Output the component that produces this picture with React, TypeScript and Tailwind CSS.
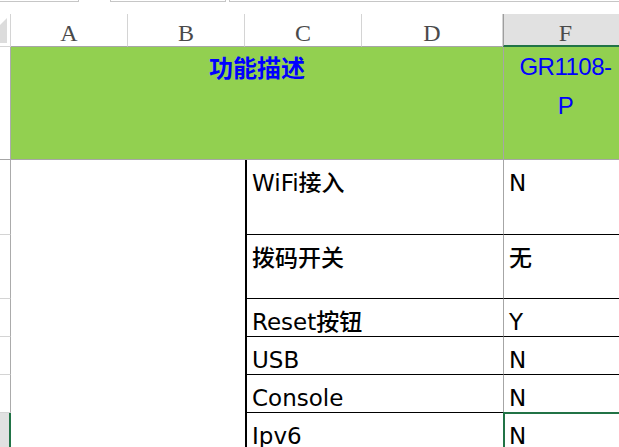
import React from 'react';

const bodyFont = { fontFamily: '"DejaVu Sans", "Noto Sans CJK SC", sans-serif' };

const rows = [
  { label: 'WiFi接入', value: 'N', h: 'h-[75px]' },
  { label: '拨码开关', value: '无', h: 'h-[64px]' },
  { label: 'Reset按钮', value: 'Y', h: 'h-[38px]' },
  { label: 'USB', value: 'N', h: 'h-[38px]' },
  { label: 'Console', value: 'N', h: 'h-[38px]' },
  { label: 'Ipv6', value: 'N', h: 'h-[38px]', selected: true },
];

const cols = [
  { name: 'A', w: 'w-[117px]' },
  { name: 'B', w: 'w-[117px]' },
  { name: 'C', w: 'w-[117px]' },
  { name: 'D', w: 'w-[141px]' },
];

export default function App() {
  return (
    <div className="w-[619px] h-[447px] overflow-hidden bg-white">
      <div className="w-[627px]">
        {/* formula bar remnants */}
        <div className="h-[14px] flex items-start">
          <div className="w-[79px] h-[2px] border-b border-r border-[#c6c6c6]" />
          <div className="ml-[31px] w-[116px] h-[2px] border-b border-x border-[#c6c6c6]" />
          <div className="ml-[3px] flex-1 h-[2px] border-b border-l border-[#c6c6c6]" />
        </div>

        {/* column headers */}
        <div className="flex h-[33px]" style={{ fontFamily: '"Liberation Serif", serif' }}>
          <div className="w-[11px] border-r border-b border-[#d4d4d4] relative">
            <svg width="11" height="33" className="absolute left-0 top-0">
              <polygon points="7,4 7,29 0,29 0,11" fill="#dcdcdc" />
            </svg>
          </div>
          {cols.map((c) => (
            <div
              key={c.name}
              className={`${c.w} border-r border-[#d4d4d4] border-b border-b-[#a6a6a6] text-center text-[24px] leading-[24px] pt-[7px] text-[#4a4a4a]`}
            >
              {c.name}
            </div>
          ))}
          <div className="flex-1 bg-[#e1e1e1] border-l border-[#9e9e9e] border-b-2 border-b-[#217346] text-center text-[24px] leading-[24px] pt-[7px] text-[#4a4a4a]">
            F
          </div>
        </div>

        {/* green header row */}
        <div className="flex h-[113px]">
          <div className="w-[11px] border-r border-[#ababab] border-b border-b-[#a6a6a6]" />
          <div
            className="w-[492px] bg-[#92d050] border-b border-[#a6a6a6] text-center text-[24px] leading-[39px] text-[#0000ff] font-bold"
            style={{ fontFamily: '"Noto Sans CJK SC", sans-serif' }}
          >
            功能描述
          </div>
          <div
            className="flex-1 bg-[#92d050] border-l border-b border-[#a6a6a6] text-center text-[24px] leading-[39px] tracking-[-0.5px] text-[#0000ff]"
            style={{ fontFamily: '"Liberation Sans", sans-serif' }}
          >
            GR1108-
            <br />P
          </div>
        </div>

        {/* body rows */}
        {rows.map((r) => (
          <div key={r.label} className={`flex ${r.h}`}>
            <div
              className={`w-[11px] border-b border-[#d4d4d4] ${
                r.selected ? 'bg-[#e1e1e1] border-r-2 border-r-[#217346]' : 'border-r border-r-[#ababab]'
              }`}
            />
            <div className="w-[234px]" />
            <div
              className="w-[258px] border-l-2 border-b border-black pl-[5px] pt-[10px] text-[23px] leading-[27px] text-black font-medium"
              style={bodyFont}
            >
              {r.label}
            </div>
            <div
              className="relative flex-1 border-l border-l-[#a6a6a6] border-b border-b-black pl-[5px] pt-[10px] text-[23px] leading-[27px] text-black font-medium"
              style={bodyFont}
            >
              {r.value}
              {r.selected && (
                <div className="absolute -top-px -left-px right-0 bottom-0 border-t-2 border-l-2 border-[#217346]" />
              )}
            </div>
          </div>
        ))}
      </div>
    </div>
  );
}
